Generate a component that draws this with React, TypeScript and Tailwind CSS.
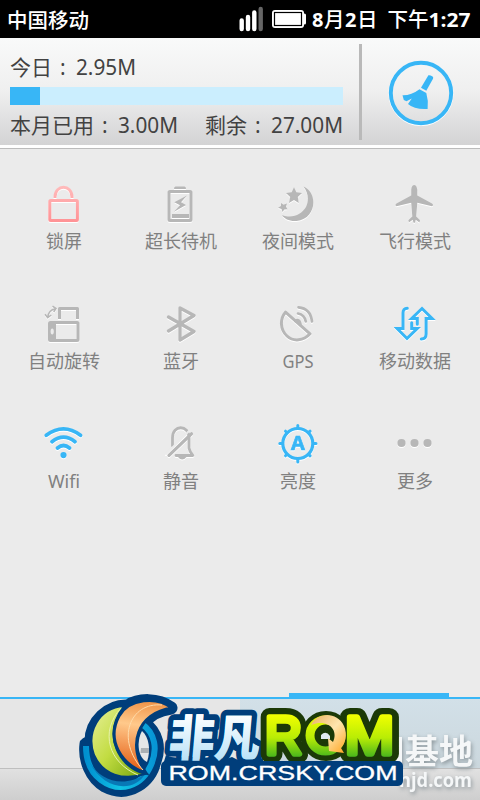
import React from "react";

const FONT = "font-['Open_Sans','Noto_Sans_CJK_SC',sans-serif]";
const BLUE = "#38b6f6";
const GREY = "#b7b7b7";

function StatusBar() {
  return (
    <header className="flex h-[38px] items-center bg-black px-[7px] text-white">
      <span className="w-[84px] text-[20.5px] leading-[38px] font-medium font-['Noto_Sans_CJK_SC',sans-serif] whitespace-nowrap">中国移动</span>
      <svg className="ml-[148px] shrink-0" width="68" height="38" viewBox="239 0 68 38">
        <g strokeWidth="4.4" strokeLinecap="round" stroke="#fff">
          <path d="M241.7 20.5V29M248 17V29M254.3 12.5V29" />
          <path stroke="#666" d="M260.7 9V29" />
        </g>
        <rect x="272" y="10" width="32" height="18" rx="3" fill="#fff" />
        <rect x="303" y="13.5" width="3" height="11" rx="1.5" fill="#fff" />
        <rect x="274.5" y="12.5" width="27" height="13" fill="#fff" stroke="#000" strokeWidth="1.2" />
      </svg>
      <svg className="shrink-0" width="166" height="38" viewBox="307 0 166 38" fill="#fff" fontSize="20" fontFamily="'Open Sans','Noto Sans CJK SC',sans-serif">
        <text x="312" y="27" fontWeight="700">8</text>
        <text x="324" y="27" fontWeight="500" fontSize="20.5">月</text>
        <text x="345" y="27" fontWeight="700">2</text>
        <text x="357" y="27" fontWeight="500" fontSize="20.5">日</text>
        <text x="387.5" y="27" fontWeight="500" fontSize="20.5" textLength="41">下午</text>
        <text x="428.5" y="27" fontWeight="700" textLength="42" lengthAdjust="spacingAndGlyphs">1:27</text>
      </svg>
    </header>
  );
}

function Usage() {
  return (
    <section className="flex h-[107px] bg-linear-to-b from-[#f9fafa] via-[#efefef] to-[#d3d3d4] text-[#424242]">
      <div className="flex w-[343px] flex-col pl-[10px]">
        <svg width="333" height="49" viewBox="10 38 333 49" fill="#424242" fontSize="21" fontFamily="'Noto Sans','Noto Sans CJK SC',sans-serif">
          <text x="10" y="75" textLength="42">今日</text>
          <text x="60" y="75">:</text>
          <text x="76" y="75" textLength="60" lengthAdjust="spacingAndGlyphs">2.95M</text>
        </svg>
        <div className="h-[18px] bg-[#cbeefe]"><div className="h-full w-[30px] bg-[#38b6f6]" /></div>
        <svg width="333" height="40" viewBox="10 105 333 40" fill="#424242" fontSize="21" fontFamily="'Noto Sans','Noto Sans CJK SC',sans-serif">
          <text x="10" y="133" textLength="84">本月已用</text>
          <text x="102" y="133">:</text>
          <text x="118" y="133" textLength="60" lengthAdjust="spacingAndGlyphs">3.00M</text>
          <text x="205" y="133" textLength="42">剩余</text>
          <text x="255" y="133">:</text>
          <text x="271" y="133" textLength="72" lengthAdjust="spacingAndGlyphs">27.00M</text>
        </svg>
      </div>
      <div className="mt-[6px] ml-4 h-24 w-[3px] bg-[#b9b9b9]" />
      <svg className="mt-[22px] ml-[26px]" width="66" height="66" viewBox="388 60 66 66">
        <circle cx="421" cy="93.5" r="31.5" fill="none" stroke="#fff" strokeWidth="2" />
        <circle cx="421" cy="93" r="30.2" fill="none" stroke={BLUE} strokeWidth="3.9" />
        <path fill={BLUE} d="M428.4 75.2Q430 74.8 432.6 76.6Q433.6 77.4 433 78.7L426.3 90.8L421 87.8Z" />
        <path fill={BLUE} d="M419.5 89.2L426.3 93Q428.7 101 427.6 109Q414.5 109.8 408 104L411.8 98.5L406.5 101.2L403.8 100L402.5 95.3Q411 95.6 419.5 89.2Z" />
      </svg>
    </section>
  );
}

const icons: Record<string, React.ReactNode> = {
  lock: (
    <g fill="none" stroke="url(#lockFill)" strokeWidth="3">
      <path d="M11.500 18V17C11.500 4 28.500 4 28.500 17V18" />
      <rect x="6.3" y="20.6" width="27.6" height="20" rx="1" />
    </g>
  ),
  battery: (
    <g>
      <path d="M15 6.5H24Q25.500 6.5 25.500 9H13.500Q13.500 6.5 15 6.5Z" fill={GREY} />
      <rect x="8.5" y="11.5" width="22" height="29" rx="1" fill="none" stroke={GREY} strokeWidth="3" />
      <path d="M11.5 34H28.5V38H11.5Z" fill={GREY} />
      <path d="M26.5 15.5L13.8 22.3L19.5 25.2L13.500 31.8L25.500 25L20.5 22.2Z" fill={GREY} />
    </g>
  ),
  night: (
    <g fill={GREY}>
      <path d="M26 6.5C41 13 39 39 19 41C12 41.5 7 39 4.5 35.3C16 39 24 34 28.5 27C31.500 20.5 31 13 26 6.5Z" />
      <path d="M16.5 7.3L18.8 12.3L24.500 13L20.3 17L21.2 23L16.5 20L11.5 23L12.7 17L8.500 13L14.2 12.3Z" />
      <path d="M3.5 23L6 24.8L9.500 23.5L8.5 26.8L10 29.3L6.8 29.6L5 32L4 29L.6 27.7L3.5 26Z" />
    </g>
  ),
  plane: (
    <path fill={GREY} d="M19.7 5C21.8 5 22.6 8 22.8 10V15.5L37.5 23.4Q39.5 25 37.5 26.2L22.8 22.8L21.7 36.5L25.5 40.3L25 42.6L21.2 39.8L20.5 42.8H19L18.2 39.8L14.4 42.6L13.9 40.3L17.8 36.5L16.7 22.8L2 26.2Q0 25 2 23.4L16.7 15.5V10C16.9 8 17.6 5 19.7 5Z" />
  ),
  rotate: (
    <g fill="none" stroke={GREY} strokeWidth="3">
      <path d="M16 19V8.5H34V19" strokeLinejoin="round" />
      <rect x="6" y="22.5" width="28.500" height="18" rx="1" />
      <path fill={GREY} stroke="none" d="M5.500 22H12.500V41H5.500Z" />
      <ellipse cx="8.7" cy="31.5" rx="1.6" ry="3" fill="#ebebeb" stroke="none" />
      <path strokeWidth="1.5" d="M4.3 17Q5 10 12 8.7M1.5 14.2L4.2 17.6L7.8 15M9 6.2L12.5 8.5L10.2 12" />
    </g>
  ),
  bluetooth: <path fill="none" stroke={GREY} strokeWidth="3.3" strokeLinejoin="round" strokeLinecap="round" d="M8 17L33.5 31.500L19.5 40V8L33.5 15.500L8 31" />,
  gps: (
    <g fill="none" stroke={GREY} strokeWidth="3" strokeLinejoin="round" strokeLinecap="round">
      <path d="M8 12.2L32.5 33.8C26 41 16 42 9.5 36C2.5 29.5 2.2 19 8 12.2Z" />
      <path d="M18 21Q21.500 18.7 22.8 24" />
      <path strokeWidth="2.7" d="M20.5 13.5Q27 14.7 28.3 21.5M21 7.3Q33 8.3 34.5 21.5" />
    </g>
  ),
  data: (
    <g fill="none" stroke={BLUE} strokeWidth="3">
      <path strokeLinecap="round" d="M12.8 8.2Q8.5 8.2 8.5 13V28.5H2.500L12.5 38.5L22.800 28.5H17.2V22.8" />
      <path strokeLinecap="round" d="M26.8 39Q31.6 39 31.6 34V18.5H37.600L27.5 8.5L17.200 18.5H22.8V24.2" />
    </g>
  ),
  wifi: (
    <g fill="none" stroke={BLUE} strokeWidth="3.7" strokeLinecap="round">
      <path d="M2.8 15.3Q20 2.5 37 15.3M8.5 21.7Q20 12.5 31.5 21.7M14 28Q20 23 26 28" />
      <circle cx="20" cy="35.1" r="3.1" fill={BLUE} stroke="none" />
    </g>
  ),
  mute: (
    <g fill="none" stroke={GREY} strokeWidth="2.8" strokeLinejoin="round" strokeLinecap="round">
      <path d="M12 26V17.500C12 4.500 28.500 4.500 28.500 17.500V28Q29 31.5 32.3 35.5H15.500" />
      <path d="M28.500 11L5.500 34" stroke="#ebebeb" strokeWidth="2" />
      <path d="M31 13.8L8.500 35.3" strokeWidth="3.2" />
      <path d="M17.5 37H26Q21.5 42 17.5 37Z" fill={GREY} stroke="none" />
    </g>
  ),
  brightness: (
    <g>
      <g fill="none" stroke={BLUE} strokeWidth="3.2">
        <circle cx="20.3" cy="23.5" r="15" />
        <path strokeLinecap="round" strokeWidth="3" d="M20.3 8V5.5M20.3 39V42M5 23.5H2.3M36 23.5H38.5M9.5 12.7L8 11.2M31 12.7L32.6 11.2M9.5 34.3L8 35.8M31 34.3L32.6 35.8" />
      </g>
      <text x="20.3" y="30" textAnchor="middle" fontFamily="'Open Sans',sans-serif" fontWeight="700" fontSize="20" fill={BLUE} stroke={BLUE} strokeWidth=".7">A</text>
    </g>
  ),
  more: <g fill={GREY}><circle cx="7" cy="23" r="4.1" /><circle cx="20" cy="23" r="4.1" /><circle cx="33" cy="23" r="4.1" /></g>,
};

const tiles: [string, string, number][] = [
  ["lock", "锁屏", 36], ["battery", "超长待机", 72], ["night", "夜间模式", 72], ["plane", "飞行模式", 72],
  ["rotate", "自动旋转", 72], ["bluetooth", "蓝牙", 36], ["gps", "GPS", 31], ["data", "移动数据", 72],
  ["wifi", "Wifi", 32], ["mute", "静音", 36], ["brightness", "亮度", 36], ["more", "更多", 36],
];

function Tile({ icon, label, width }: { icon: string; label: string; width: number }) {
  return (
    <div className="flex h-[120px] flex-col items-center">
      <svg width="42" height="48" viewBox="-0.5 0 42 48" className="[filter:drop-shadow(0_1px_0_#fff)]">
        <defs>
          <linearGradient id="lockFill" x1="0" y1="5" x2="0" y2="42" gradientUnits="userSpaceOnUse">
            <stop stopColor="#ffbcbc" /><stop offset="1" stopColor="#ff9295" />
          </linearGradient>
        </defs>
        {icons[icon]}
      </svg>
      <svg width="80" height="28" viewBox="0 0 80 28">
        <text x={40 - width / 2} y="19.5" textLength={width} lengthAdjust="spacingAndGlyphs" fontSize="18" fontFamily="'Noto Sans','Noto Sans CJK SC',sans-serif" fill="#808080">{label}</text>
      </svg>
    </div>
  );
}

function Branding() {
  return (
    <svg className="absolute bottom-0 left-0" width="480" height="115" viewBox="0 685 480 115">
      <defs>
        <linearGradient id="green" x1="0" y1="0" x2="1" y2="1"><stop stopColor="#e7f09a" /><stop offset=".5" stopColor="#c2dc42" /><stop offset="1" stopColor="#74a50c" /></linearGradient>
        <linearGradient id="orange" x1=".6" y1="0" x2=".5" y2="1"><stop stopColor="#ef9144" /><stop offset=".35" stopColor="#ffc98b" /><stop offset="1" stopColor="#e45a10" /></linearGradient>
        <linearGradient id="ring" x1="0" y1="0" x2="1" y2="0"><stop stopColor="#0090d0" /><stop offset=".5" stopColor="#11c2e4" /><stop offset="1" stopColor="#0795d5" /></linearGradient>
        <linearGradient id="ice" x1="0" y1="714" x2="0" y2="760" gradientUnits="userSpaceOnUse"><stop stopColor="#fff" /><stop offset="1" stopColor="#b9e2f8" /></linearGradient>
        <linearGradient id="lime" x1="0" y1="714" x2="0" y2="757" gradientUnits="userSpaceOnUse"><stop stopColor="#f3ff00" /><stop offset=".55" stopColor="#b9ed05" /><stop offset="1" stopColor="#48b51c" /></linearGradient>
        <linearGradient id="arrow" x1="0" y1="0" x2="1" y2="1"><stop stopColor="#e9b25e" /><stop offset=".5" stopColor="#ffe5ae" /><stop offset="1" stopColor="#ffa51f" /></linearGradient>
      </defs>
      <g fontFamily="'Open Sans','Noto Sans CJK SC',sans-serif" fontWeight="700" fill="#f5f7f8" className="[filter:drop-shadow(1px_2px_2px_#8a9499)]">
        <path d="M397 737H402V763Q401 767 396 766Z" />
        <text x="405" y="764" fontSize="34" textLength="68">基地</text>
        <text x="399" y="787" fontSize="20" textLength="73" lengthAdjust="spacingAndGlyphs">njd.com</text>
      </g>
      <g fill="#003e7b" stroke="#003e7b" strokeWidth="13" strokeLinejoin="round">
        <path d="M86 744C84 760 91 778 105 786C130 799 151 779 154 764C161 748 157 732 144 723C149 715 158 710 171 708C158 698 138 699 128 706C108 705 91 722 91 741Z" />
      </g>
      <path d="M142 724C155 733 158 749 151 765C142 786 120 794 101 780C90 772 86 761 86 746" fill="none" stroke="url(#ring)" strokeWidth="6" />
      <path d="M89 761C99 780 123 789 145 774C135 792 104 792 89 761Z" fill="#0878b6" />
      <path d="M142 731C149 737 151 750 147 762C138 758 136 742 142 731Z" fill="#e4e6e7" />
      <path d="M141 748H149V753H140.500Z" fill="#aab0b4" />
      <path d="M124 706C98 708 86 733 94 755C103 775 123 781 145 774C120 768 101 736 124 706Z" fill="url(#green)" stroke="#003e7b" strokeWidth="2" />
      <path d="M121 708C99 732 109 763 138 775" fill="none" stroke="#e7f2ac" strokeWidth="1" />
      <path d="M172 708C157 696 129 698 119 716C106 740 121 765 146 773C127 746 137 713 172 708Z" fill="url(#orange)" stroke="#003e7b" strokeWidth="3" />
      <path d="M162 705C130 702 115 739 143 770" fill="none" stroke="#ffdba9" strokeWidth="1" />

      <g transform="translate(66 0) skewX(-5)" fontFamily="'Noto Sans CJK SC',sans-serif" fontWeight="900" fontSize="49">
        <text x="168" y="756" textLength="91" lengthAdjust="spacingAndGlyphs" fill="url(#ice)" stroke="#003e7b" strokeWidth="12" strokeLinejoin="round" paintOrder="stroke">非凡</text>
      </g>
      <path d="M166 755Q175 760 189 756L200 759L214 756Q219 752 223 760L232 757L240 761L263 758V768H162Z" fill="#003e7b" />
      <g transform="translate(66 0) skewX(-5)" fontFamily="'Noto Sans CJK SC',sans-serif" fontWeight="900" fontSize="49">
        <text x="168" y="756" textLength="91" lengthAdjust="spacingAndGlyphs" fill="url(#ice)">非凡</text>
      </g>

      <g fontFamily="'Liberation Sans',sans-serif" fontWeight="400" fontSize="54" strokeLinejoin="round">
        <g fill="#1b3907" stroke="#1b3907" strokeWidth="18">
          <text x="265" y="754" textLength="37" lengthAdjust="spacingAndGlyphs">R</text>
          <text x="345" y="754" textLength="49" lengthAdjust="spacingAndGlyphs">M</text>
          <circle cx="326" cy="736" r="16" />
        </g>
        <g fill="url(#lime)" stroke="url(#lime)" strokeWidth="5.5">
          <text x="265" y="754" textLength="37" lengthAdjust="spacingAndGlyphs">R</text>
          <text x="345" y="754" textLength="49" lengthAdjust="spacingAndGlyphs">M</text>
        </g>
      </g>
      <circle cx="325.500" cy="735.500" r="15.500" fill="none" stroke="url(#lime)" strokeWidth="9" />
      <path d="M321 735Q326 730 330 736V739H321Z" fill="#dfe9ef" />
      <path d="M311 725C317 712 337 711 344 726C348 735 345 744 341 748L344 753L329 751L328 738L333 742C339 730 328 718 311 725Z" fill="url(#arrow)" />

      <rect x="161" y="761" width="242" height="25" rx="5" fill="#003e7b" />
      <text x="168.500" y="779.500" textLength="229" lengthAdjust="spacingAndGlyphs" fontFamily="'Liberation Sans',sans-serif" fontSize="19.500" fill="#fff" stroke="#fff" strokeWidth=".3">ROM.CRSKY.COM</text>
    </svg>
  );
}

export default function App() {
  return (
    <main className={`relative flex h-[800px] w-[480px] flex-col overflow-hidden bg-[#ebebeb] ${FONT}`}>
      <StatusBar />
      <Usage />
      <div className="h-[3px] bg-white" />
      <div className="h-px bg-[#bcbcbc]" />
      <section className="grid grow grid-cols-[repeat(4,117px)] content-start pt-[31px] pl-[5px]">
        {tiles.map(([icon, label, width]) => <Tile key={icon} icon={icon} label={label} width={width} />)}
      </section>
      <nav className="flex h-[107px] flex-col">
        <div className="ml-[289px] h-1 w-40 bg-[#38b6f6]" />
        <div className="h-0.5 bg-[#38b6f6]" />
        <div className="flex h-[70px] border-b border-[#bfbfbf]">
          <div className="w-60 bg-[#e6e6e6]" />
          <div className="w-60 bg-linear-to-b from-[#d2e0e8] to-[#cbd7dd]" />
        </div>
        <div className="grow bg-linear-to-b from-[#e1e1e1] to-[#cecece]" />
      </nav>
      <Branding />
    </main>
  );
}
